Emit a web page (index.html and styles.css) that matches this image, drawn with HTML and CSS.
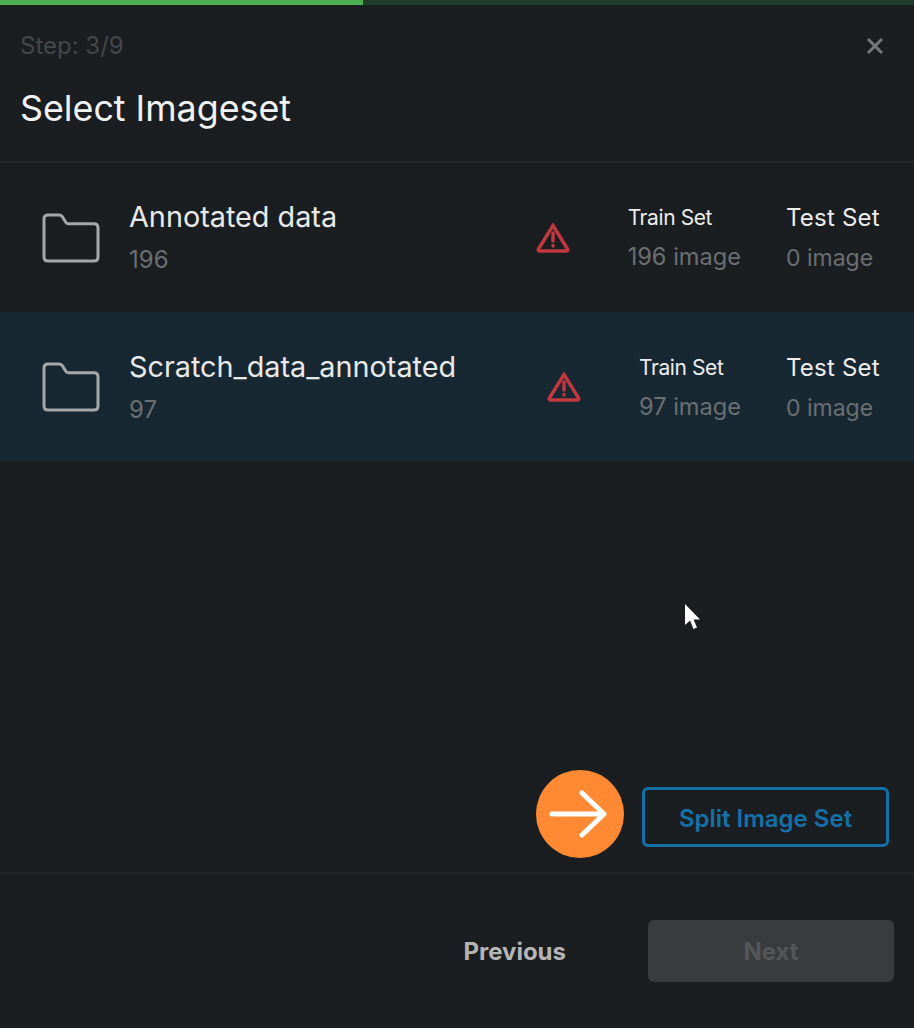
FILE: index.html
```html
<!DOCTYPE html>
<html lang="en">
<head>
<meta charset="utf-8">
<title>Select Imageset</title>
<link rel="stylesheet" href="styles.css">
</head>
<body>
<div class="dialog">
  <div class="progress"><div class="progress-fill"></div></div>
  <header class="head">
    <div class="head-top">
      <span class="step">Step: 3/9</span>
      <svg class="close" viewBox="0 0 18 18" aria-label="Close"><path d="M2 2L16 16M16 2L2 16"/></svg>
    </div>
    <h1 class="title">Select Imageset</h1>
  </header>
  <main class="list">
    <div class="row">
      <svg class="folder" viewBox="0 0 58 50"><path d="M6 2H17C18.500 2 19.500 2.600 20.300 3.700L24 9.500C24.600 10.400 25.400 10.800 26.500 10.800H52C54.500 10.800 56 12.300 56 14.800V44C56 46.500 54.500 48 52 48H6C3.500 48 2 46.500 2 44V6C2 3.500 3.500 2 6 2Z"/></svg>
      <div class="info">
        <div class="name">Annotated data</div>
        <div class="count">196</div>
      </div>
      <svg class="warn" viewBox="0 0 34 30"><path class="warn-tri" d="M17 2.500L31.500 26C32.300 27.300 31.500 28 30.200 28H3.800C2.500 28 1.700 27.300 2.500 26Z"/><path class="warn-mark" d="M17 10V18M17 22.500V23"/></svg>
      <div class="stat stat-train">
        <div class="stat-label-train">Train Set</div>
        <div class="stat-value stat-value-train">196 image</div>
      </div>
      <div class="stat stat-test">
        <div class="stat-label">Test Set</div>
        <div class="stat-value">0 image</div>
      </div>
    </div>
    <div class="row row-active">
      <svg class="folder" viewBox="0 0 58 50"><path d="M6 2H17C18.500 2 19.500 2.600 20.300 3.700L24 9.500C24.600 10.400 25.400 10.800 26.500 10.800H52C54.500 10.800 56 12.300 56 14.800V44C56 46.500 54.500 48 52 48H6C3.500 48 2 46.500 2 44V6C2 3.500 3.500 2 6 2Z"/></svg>
      <div class="info">
        <div class="name">Scratch_data_annotated</div>
        <div class="count">97</div>
      </div>
      <svg class="warn" viewBox="0 0 34 30"><path class="warn-tri" d="M17 2.500L31.500 26C32.300 27.300 31.500 28 30.200 28H3.800C2.500 28 1.700 27.300 2.500 26Z"/><path class="warn-mark" d="M17 10V18M17 22.500V23"/></svg>
      <div class="stat stat-train">
        <div class="stat-label-train">Train Set</div>
        <div class="stat-value stat-value-train">97 image</div>
      </div>
      <div class="stat stat-test">
        <div class="stat-label">Test Set</div>
        <div class="stat-value">0 image</div>
      </div>
    </div>
  </main>
  <div class="split-bar">
    <button class="split">Split Image Set</button>
  </div>
  <footer class="foot">
    <button class="prev">Previous</button>
    <button class="next">Next</button>
  </footer>
  <div class="marker">
    <svg class="marker-arrow" viewBox="0 0 58 50"><path d="M3 25H55M33 4L55 25L33 46"/></svg>
  </div>
  <svg class="cursor" viewBox="0 0 18 28"><path d="M1 1V22L6 17.500L9.500 26L13 24.500L9.500 16.500H16Z"/></svg>
</div>
</body>
</html>
```
FILE: styles.css
```css
* { box-sizing: border-box; }
html, body { margin: 0; padding: 0; }
body { background: #1b1e21; font-family: Inter, "Noto Sans", sans-serif; overflow: hidden; }
.dialog { position: relative; width: 914px; height: 1028px; display: flex; flex-direction: column; background: #1b1e21; }
.progress { height: 5px; background: #1f3d26; flex: none; }
.progress-fill { width: 363px; height: 100%; background: #4cae50; }
.head { height: 158px; flex: none; padding: 0 30px 0 20px; border-bottom: 2px solid #23272a; }
.head-top { display: flex; justify-content: space-between; align-items: center; padding-top: 27px; height: 54px; }
.step { font-size: 24px; line-height: 27px; color: #43474a; }
.close { width: 18px; height: 18px; fill: none; stroke: #75787a; stroke-width: 3; }
.title { margin: 28px 0 0; font-size: 35.8px; line-height: 42px; font-weight: 400; color: #f1f2f2; }
.list { flex: none; min-height: 298px; display: flex; flex-direction: column; }
.row { height: 149px; flex: none; display: flex; align-items: center; padding: 0 35px 0 42px; }
.row-active { background: #182833; }
.row-active .info, .row-active .stat { margin-top: 2px; }
.folder { width: 58px; height: 50px; flex: none; fill: none; stroke: #a5a8a9; stroke-width: 3; }
.info { margin-left: 29px; margin-right: auto; white-space: nowrap; padding-top: 2px; }
.name { font-size: 28.8px; line-height: 34px; color: #e8e9e9; margin-top: -3px; }
.count { margin-top: 12px; font-size: 24px; line-height: 28px; color: #6b6f72; }
.warn { width: 34px; height: 30px; flex: none; fill: none; stroke: #c2383f; stroke-width: 3.4; margin-right: 58px; }
.warn-mark { stroke-linecap: round; }
.stat { flex: none; white-space: nowrap; }
.stat-test { width: 93px; margin-left: 45px; }
.stat-label { font-size: 24px; line-height: 28px; color: #eceded; letter-spacing: 0.2px; }
.stat-label-train { font-size: 21px; line-height: 28px; color: #eceded; letter-spacing: -0.4px; }
.stat-value { margin-top: 12px; font-size: 23px; line-height: 28px; color: #6b6f72; }
.stat-value-train { font-size: 23.6px; margin-top: 11px; }
.split-bar { flex: 1; display: flex; align-items: flex-end; justify-content: flex-end; padding: 0 25px 25px 0; border-bottom: 2px solid #212528; }
.split { width: 247px; height: 60px; padding: 3px 0 0 0; background: transparent; border: 3px solid #1670a8; border-radius: 6px; color: #1670a8; font: 600 24px Inter, sans-serif; }
.foot { height: 154px; flex: none; display: flex; align-items: flex-start; padding: 46px 20px 0 0; justify-content: flex-end; }
.prev { background: none; border: none; padding: 0; margin-right: 82px; height: 62px; color: #b4b5b4; font: 700 24px Inter, sans-serif; }
.next { width: 246px; height: 62px; padding: 0; background: #393c3f; border: none; border-radius: 6px; color: #54575a; font: 700 24px Inter, sans-serif; }
.marker { position: absolute; left: 536px; top: 770px; width: 88px; height: 88px; border-radius: 50%; background: #ff8a33; display: flex; align-items: center; justify-content: center; }
.marker-arrow { width: 58px; height: 50px; margin-right: 5px; fill: none; stroke: #fff; stroke-width: 5; stroke-linecap: round; stroke-linejoin: round; }
.cursor { position: absolute; left: 684px; top: 603px; width: 18px; height: 28px; fill: #fff; }
```
